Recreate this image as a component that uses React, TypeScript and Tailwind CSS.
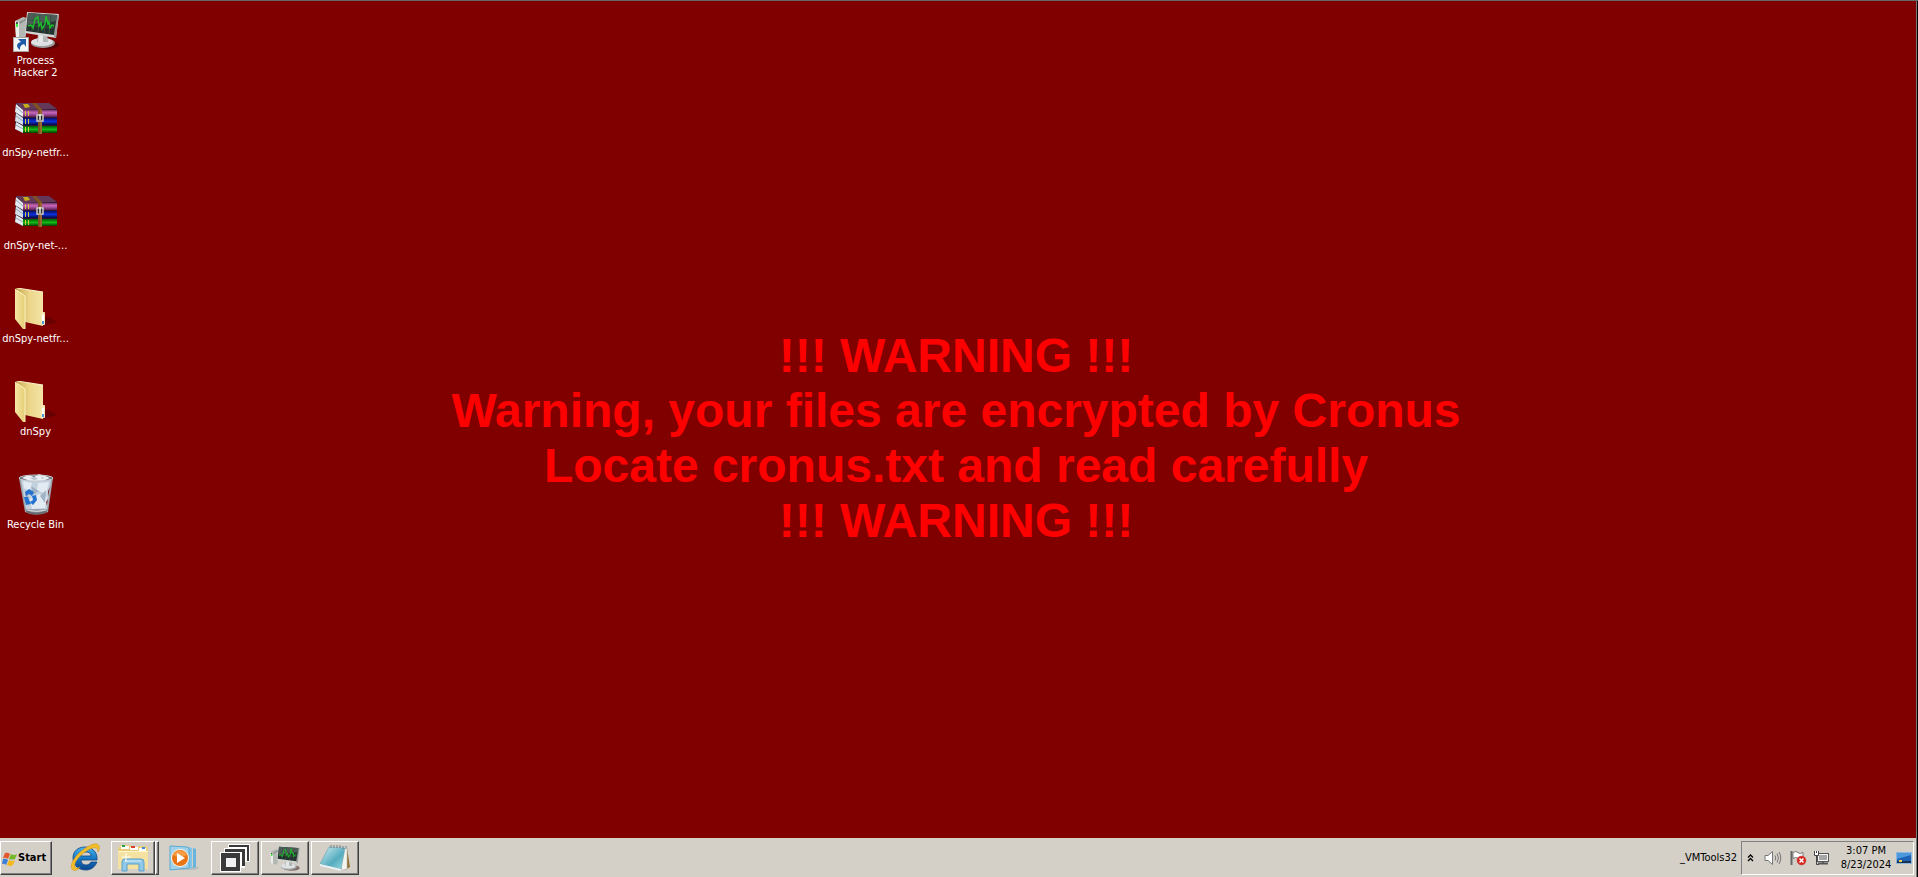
import type { ReactNode } from "react";

interface Shortcut {
    name: string;
    icon: ReactNode;
}

function MonitorArt() {
    return (
        <>
            <path d="M2 10 10 6 14 7 13 24 12 29 3 27Z" fill="#b4b8b5" />
            <path d="M2 10 6 11 6 28 3 27Z" fill="#eceeec" />
            <path d="M6 11 14 7 13 9 7 13Z" fill="#8a8f8b" />
            <path d="M3 11h2v4H3z" fill="#4a504c" />
            <rect x="3" y="13" width="2" height="3" fill="#3df23a" />
            <ellipse cx="34" cy="34" rx="12" ry="4" fill="#2c0503" opacity="0.5" />
            <ellipse cx="30" cy="32" rx="12" ry="5" fill="#9ca0a0" />
            <ellipse cx="29" cy="31" rx="11" ry="4" fill="#dfe2e2" />
            <path d="M25 23h9l1 8H24z" fill="#b2b6b7" />
            <path d="M26 23h4v8h-5z" fill="#e6e8e8" />
            <path d="M14 1 46 3 43 27 12 22Z" fill="#d3d6d4" />
            <path d="M46 3 43 27 41 26 43 5Z" fill="#969a99" />
            <path d="M15 2 44 4 41 24 13 20Z" fill="#24322d" />
            <path d="M15 2 44 4 43 10 14 14Z" fill="#4e5c57" />
            <path d="M15 9 42 11M15 14 42 17M21 3 19 20M27 3 25 21M33 4 31 22M38 4 36 23" stroke="#3b5145" />
            <path d="M15 15l3-1 2 3 2-9 3-2 1 9 2-3 1 6 3-5 1-8 2 8 1-2 1 6 2-3 2 1" fill="none" stroke="#1cbf2a" strokeWidth="1.4" />
        </>
    );
}

function ProcessHackerIcon() {
    return (
        <svg width="46" height="42" viewBox="0 0 46 42">
            <MonitorArt />
            <rect x="0.5" y="26.5" width="15" height="14" fill="#f4f4f4" stroke="#a6a6a6" />
            <path d="M5 28h8v8l-2-3c-3 1-4 2-4 6-4-3-4-7 1-8z" fill="#1d5ba8" />
        </svg>
    );
}

function ArchiveIcon() {
    return (
        <svg width="42" height="33" viewBox="0 0 42 33">
            <defs>
                <linearGradient id="pink" x2="0" y2="1">
                    <stop offset="0" stopColor="#7b3570" />
                    <stop offset="0.4" stopColor="#c869be" />
                    <stop offset="1" stopColor="#5b1c55" />
                </linearGradient>
                <linearGradient id="blue" x2="0" y2="1">
                    <stop offset="0" stopColor="#060f70" />
                    <stop offset="0.5" stopColor="#0f30d8" />
                    <stop offset="1" stopColor="#020640" />
                </linearGradient>
                <linearGradient id="green" x2="0" y2="1">
                    <stop offset="0" stopColor="#035a08" />
                    <stop offset="0.5" stopColor="#12bb15" />
                    <stop offset="1" stopColor="#033804" />
                </linearGradient>
            </defs>
            <path d="M1 1 34 1 42 7 42 31 8 31 0 27Z" fill="#2a1930" />
            <path d="M1 1 34 1 42 7 8 8Z" fill="#643858" />
            <path d="M8 2l5 0 2 3-5 1z" fill="#c5b019" />
            <path d="M1 2 8 8 8 15 0 10Z" fill="#e4eaef" />
            <path d="M1 11 8 16 8 23 0 19Z" fill="#d5dfe8" />
            <path d="M1 20 8 24 8 31 0 27Z" fill="#e4eaef" />
            <path d="M1 5 8 11M1 14 8 19M1 23 8 27" stroke="#94a5b4" />
            <rect x="8" y="8" width="34" height="7" fill="url(#pink)" />
            <rect x="8" y="16" width="34" height="7" fill="url(#blue)" />
            <rect x="8" y="24" width="34" height="7" fill="url(#green)" />
            <path d="M10.5 9v5M13.5 9v5M10.5 17v5M13.5 17v5M10.5 25v5M13.5 25v5" stroke="#d3c83e" />
            <path d="M17 1h4l6 6v25h-4V8z" fill="#7f5220" />
            <path d="M26 8v24" stroke="#b67f3e" />
            <rect x="22" y="13" width="6" height="6" fill="#2a2a28" stroke="#c9c9c3" strokeWidth="1.5" />
            <path d="M25 12v6" stroke="#f1efe8" strokeWidth="1.5" />
        </svg>
    );
}

function FolderIcon() {
    return (
        <svg width="42" height="42" viewBox="0 0 42 42">
            <defs>
                <linearGradient id="flap">
                    <stop offset="0" stopColor="#f6e7a6" />
                    <stop offset="1" stopColor="#e5cd74" />
                </linearGradient>
                <linearGradient id="back">
                    <stop offset="0" stopColor="#c7a850" />
                    <stop offset="0.5" stopColor="#ecd68a" />
                    <stop offset="1" stopColor="#f3e3a5" />
                </linearGradient>
            </defs>
            <path d="M28 38 42 34 34 29 28 30Z" fill="#5c0000" opacity="0.7" />
            <path d="M1 0 28 4 28 38 10 34 5 10Z" fill="url(#back)" />
            <path d="M2 0 28 4" stroke="#fff6cf" />
            <rect x="26" y="24" width="4" height="13" rx="1" fill="#f5e9b6" />
            <rect x="27" y="27" width="2" height="8" fill="#fff" />
            <rect x="27" y="33" width="2" height="3" fill="#4a98dd" />
            <path d="M0 1 10 8 10 41 8 41 0 31Z" fill="url(#flap)" />
            <path d="M0 1 10 8 10 41" fill="none" stroke="#fff4c4" />
        </svg>
    );
}

function RecycleBinIcon() {
    return (
        <svg width="36" height="41" viewBox="0 0 36 41">
            <path d="M1 4 35 4 30 38Q18 43 7 38Z" fill="#9aa3ab" />
            <path d="M3 6 33 6 29 35 8 35Z" fill="#c3d1de" />
            <path d="M5 7 14 9 12 17 6 14ZM20 9l11-1-3 12-9-4zM12 25l9-5 8 3-2 11-13 1z" fill="#e3ebf2" />
            <path d="M13 12l8 5-6 4zM22 22l6-6-1 13zM7 18l4 5-3 4z" fill="#a0b3c4" />
            <path d="M30 17l2-4-2 10zM28 28l2-3-1 7z" fill="#7d3038" />
            <ellipse cx="18" cy="4" rx="17" ry="3" fill="#68717a" />
            <path d="M4 4 10 1 16 3 21 0 27 2 32 4 25 7 12 7Z" fill="#eceff2" />
            <path d="M12 4l5-1 3 2-4 1zM23 3l4 1-3 1z" fill="#b5c0ca" />
            <ellipse cx="18" cy="4" rx="17" ry="3" fill="none" stroke="#c3ccd3" />
            <path d="M8 36q10 5 21 0l-1 3q-10 3-19 0z" fill="#666c72" />
            <path d="M9 36q9 3 19 0" fill="none" stroke="#d5dade" />
            <path d="M7 18l4-3 5 3-2 4-3-2-3 2zM6 23l4 0 1 3 2 4-5 1zM14 22l4-1 1 5-4 5-3-3 3-2z" fill="#2472cf" />
        </svg>
    );
}

function StartFlag() {
    return (
        <svg width="16" height="14" viewBox="0 0 16 14">
            <path d="M3 1q3-1 5 1L6 7Q4 5 1 6z" fill="#e4572b" />
            <path d="M9 2q3 2 6 0l-2 5Q10 8 7 7z" fill="#76b72a" />
            <path d="M1 7q3-1 5 1l-2 5Q2 11 0 12z" fill="#3d7fd6" />
            <path d="M7 8q3 2 6 0l-2 5q-3 2-6 0z" fill="#f4b81f" />
        </svg>
    );
}

function ExplorerE() {
    return (
        <svg width="32" height="30" viewBox="0 0 32 30">
            <defs>
                <linearGradient id="ie" x2="0" y2="1">
                    <stop offset="0" stopColor="#49b4ea" />
                    <stop offset="0.5" stopColor="#1679c6" />
                    <stop offset="1" stopColor="#0b448c" />
                </linearGradient>
            </defs>
            <path d="M16 4c7 0 12 5 12 11v2H12c0 3 2 5 5 5 2 0 4-1 5-3h6c-2 5-6 8-11 8C9 27 4 22 4 15S9 4 16 4zm-4 9h10c0-3-2-4-5-4s-5 1-5 4z" fill="url(#ie)" fillRule="evenodd" stroke="#0e4687" strokeWidth="0.8" />
            <path d="M4 27C-1 24 5 13 15 6 22 1 29-1 30 3c1 2 0 4-1 6 0-3-1-5-5-4C16 7 4 18 6 24c1 2 3 1 5 0-2 3-5 4-7 3z" fill="#f2bd2b" stroke="#c98d12" strokeWidth="0.5" />
        </svg>
    );
}

function LibraryIcon() {
    return (
        <svg width="32" height="28" viewBox="0 0 32 28">
            <path d="M2 3 4 1h9l2 2h5l2-1h7l2 2v21H1V5z" fill="#e9cf7c" />
            <rect x="4" y="2" width="8" height="3" fill="#fff" />
            <rect x="5" y="1" width="3" height="2" fill="#26a34a" />
            <rect x="13" y="3" width="8" height="3" fill="#fff" />
            <rect x="14" y="2" width="4" height="2" fill="#d6402d" />
            <rect x="22" y="4" width="7" height="3" fill="#fff" />
            <rect x="25" y="3" width="3" height="2" fill="#3987d9" />
            <path d="M1 7h30v18H1z" fill="#f5e2a0" />
            <path d="M1 7.5h30" stroke="#fff7d0" />
            <path d="M5 27v-9q0-3 3-3h16q3 0 3 3v9h-5v-7H10v7z" fill="#8fc8e8" stroke="#5b9fc9" />
            <path d="M8 17h16" stroke="#d9f1fc" />
            <path d="M9 9v9M5 13h9" stroke="#fff" />
        </svg>
    );
}

function MediaPlayerIcon() {
    return (
        <svg width="34" height="26" viewBox="0 0 34 26">
            <ellipse cx="19" cy="23" rx="12" ry="2" fill="#b6bcbc" />
            <path d="M25 3l3 1v18l-3 1z" fill="#65b5e0" />
            <path d="M21 2l3 1v20l-3 1z" fill="#81c5e8" />
            <path d="M2 1 19 2 21 3v20L2 25z" fill="#a2d2ea" stroke="#5aa9d2" />
            <circle cx="12" cy="13" r="9" fill="#fff3e5" />
            <circle cx="12" cy="13" r="8" fill="#e87414" />
            <path d="M5 10a8 8 0 0 1 14 0Q12 14 5 10z" fill="#f59c42" />
            <path d="M9 8 17 13 9 18Z" fill="#fff" />
        </svg>
    );
}

function CascadeIcon() {
    return (
        <svg width="30" height="28" viewBox="0 0 30 28">
            <path d="M8 0h22v18h-5v10H0V8h4V4h4z" fill="#fff" />
            <path d="M9 1h20v16h-2V3H9z" fill="#3a3a3a" />
            <path d="M5 5h20v17h-3V8H5z" fill="#3a3a3a" />
            <path d="M21 24h4v4h-4zM26 18h4v6h-4z" fill="#d4d0c8" />
            <rect x="1" y="9" width="19" height="18" fill="#3a3a3a" />
            <rect x="6" y="14" width="10" height="9" fill="#f1f1f4" />
        </svg>
    );
}

function NotepadIcon() {
    return (
        <svg width="32" height="28" viewBox="0 0 32 28">
            <defs>
                <linearGradient id="pad" x2="1" y2="1">
                    <stop offset="0" stopColor="#d4eff3" />
                    <stop offset="0.6" stopColor="#55acbf" />
                    <stop offset="1" stopColor="#9bdbe6" />
                </linearGradient>
            </defs>
            <path d="M28 4 31 23 26 26Z" fill="#916f33" />
            <path d="M12 2 28 3 28 25 23 26Z" fill="#f4f4ee" stroke="#b9bcb9" strokeWidth="0.6" />
            <path d="M10 3 26 4 22 25 1 20Z" fill="url(#pad)" stroke="#679eaa" strokeWidth="0.6" />
            <path d="M1 20 22 25 22 27 1 22Z" fill="#e7f4f5" />
            <path d="M12 1v3M15 1v3M18 1v3M21 1v3M24 2v3M27 2v3" stroke="#727c7d" />
        </svg>
    );
}

const shortcuts: Shortcut[] = [
    { name: "Process Hacker 2", icon: <ProcessHackerIcon /> },
    { name: "dnSpy-netfr...", icon: <ArchiveIcon /> },
    { name: "dnSpy-net-...", icon: <ArchiveIcon /> },
    { name: "dnSpy-netfr...", icon: <FolderIcon /> },
    { name: "dnSpy", icon: <FolderIcon /> },
    { name: "Recycle Bin", icon: <RecycleBinIcon /> },
];

const raised = "border border-t-white border-l-white border-r-[#404040] border-b-[#404040] shadow-[inset_-1px_-1px_0_#808080]";

function TaskButton({ label, framed, children }: { label: string; framed?: boolean; children: ReactNode }) {
    return (
        <button aria-label={label} className={`flex h-[34px] w-12 items-center justify-center ${framed ? raised : ""}`}>
            {children}
        </button>
    );
}

function Tray() {
    return (
        <div className="flex h-[34px] items-center border border-t-[#808080] border-l-[#808080] border-r-white border-b-white pr-px pl-0.5">
            <button aria-label="Show hidden icons" className="flex w-3 justify-center">
                <svg width="7" height="8" viewBox="0 0 7 8" fill="none" stroke="#000" strokeWidth="1.3">
                    <path d="M1 3.5 3.5 1 6 3.5M1 7 3.5 4.5 6 7" />
                </svg>
            </button>
            <button aria-label="Volume" className="ml-2">
                <svg width="18" height="16" viewBox="0 0 18 16" fill="none" stroke="#777">
                    <path d="M1 5.5h3L8.5 1.5v13L4 10.5H1z" fill="#fff" />
                    <path d="M11 5.5q1.5 2.5 0 5M13 3.5q3 4.500 0 9M15 2q3.500 6 0 12" />
                </svg>
            </button>
            <button aria-label="Action Center" className="ml-2">
                <svg width="17" height="16" viewBox="0 0 17 16">
                    <path d="M1.5 1v14" stroke="#666" strokeWidth="2" />
                    <path d="M3 2.5q3-2 5 0t5 0v6q-3 2-5 0t-5 0z" fill="#fff" stroke="#777" />
                    <circle cx="11.5" cy="10.5" r="4.5" fill="#d8231c" stroke="#c0504a" strokeWidth="0.5" />
                    <path d="M9.5 8.5l4 4M13.5 8.5l-4 4" stroke="#fff" strokeWidth="1.6" />
                </svg>
            </button>
            <button aria-label="Network" className="ml-1.5">
                <svg width="17" height="16" viewBox="0 0 17 16">
                    <rect x="4.5" y="3.500" width="11" height="8" fill="#a5a5a5" stroke="#555" />
                    <rect x="5.5" y="4.500" width="9" height="6" fill="none" stroke="#f6f6f6" />
                    <path d="M5 13.5h10M10 12v2" stroke="#555" strokeWidth="2" />
                    <path d="M3.5 6v8.500H6" fill="none" stroke="#444" />
                    <path d="M1.500 1v4.500h4V1M3.500 1v2" fill="#fff" stroke="#444" />
                </svg>
            </button>
            <div className="ml-2 w-14 text-center text-[11px] leading-[14px] whitespace-nowrap">
                <div>3:07 PM</div>
                <div>8/23/2024</div>
            </div>
            <button aria-label="Show desktop" className="ml-0.5">
                <svg width="16" height="14" viewBox="0 0 16 14">
                    <rect x="0.5" y="1.5" width="15" height="11" fill="#1f62b5" stroke="#8db6df" />
                    <path d="M1 2h14v2L1 8z" fill="#4b98df" />
                    <path d="M1 10h14v2H1z" fill="#173252" />
                    <rect x="3" y="9" width="3" height="2" fill="#f0cf45" />
                </svg>
            </button>
        </div>
    );
}

export default function App() {
    return (
        <div className="flex min-h-screen flex-col border-t border-t-[#666] bg-[#800000] font-['DejaVu_Sans_Condensed','DejaVu_Sans',sans-serif] text-[11px] shadow-[inset_-1px_0_0_#000,inset_-2px_0_0_#777]">
            <main className="flex flex-1">
                <ul className="w-[71px] pt-[9px]">
                    {shortcuts.map((item, index) => (
                        <li key={index} className={index === 0 ? "h-[91px]" : "h-[93px]"}>
                            <button className="flex w-full flex-col items-center text-white">
                                <span className="flex h-[42px] items-start pt-px">{item.icon}</span>
                                <span className={`leading-3 ${index === 0 ? "mt-[3px] w-14" : "mt-1 whitespace-nowrap"}`}>{item.name}</span>
                            </button>
                        </li>
                    ))}
                </ul>
                <h1 className="flex flex-1 flex-col justify-center pt-9 pr-[77px] text-center font-['Liberation_Sans',Arial,sans-serif] text-[48px] leading-[55px] font-bold text-[#ff0000]">
                    <span>!!! WARNING !!!</span>
                    <span>Warning, your files are encrypted by Cronus</span>
                    <span>Locate cronus.txt and read carefully</span>
                    <span>!!! WARNING !!!</span>
                </h1>
            </main>
            <footer className="mr-0.5 flex h-[39px] items-center bg-[#d4d0c8] text-black">
                <button className={`flex h-[34px] w-[52px] items-center pt-0.5 pl-px font-bold ${raised}`}>
                    <StartFlag />
                    Start
                </button>
                <nav className="ml-[9px] flex gap-0.5">
                    <TaskButton label="Internet Explorer"><ExplorerE /></TaskButton>
                    <div className="flex w-12">
                        <button aria-label="Windows Explorer" className={`flex h-[34px] flex-1 items-center justify-center ${raised}`}>
                            <LibraryIcon />
                        </button>
                        <span className={`w-1 ${raised}`} />
                    </div>
                    <TaskButton label="Media Player"><MediaPlayerIcon /></TaskButton>
                    <TaskButton label="Window switcher" framed><CascadeIcon /></TaskButton>
                    <TaskButton label="Process Hacker" framed>
                        <svg width="32" height="28" viewBox="0 0 48 38"><MonitorArt /></svg>
                    </TaskButton>
                    <TaskButton label="Notepad" framed><NotepadIcon /></TaskButton>
                </nav>
                <span className="mr-1 ml-auto pt-0.5">_VMTools32</span>
                <Tray />
                <span className="w-0.5" />
            </footer>
        </div>
    );
}
